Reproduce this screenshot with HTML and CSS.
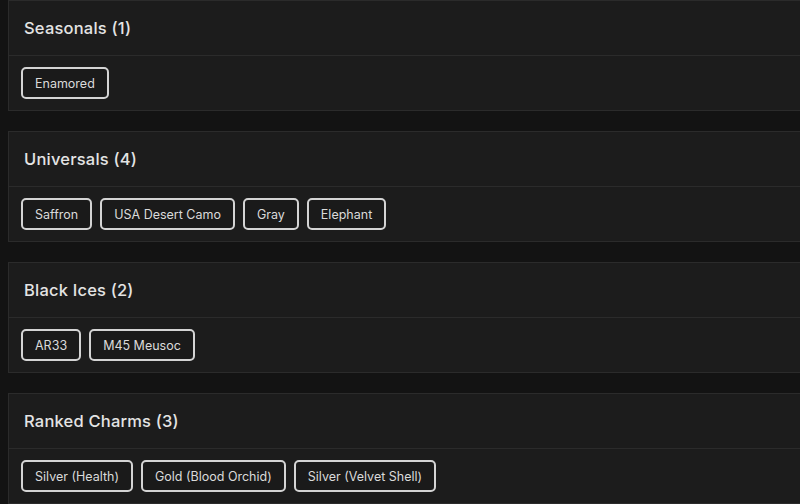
FILE: index.html
```html
<!DOCTYPE html>
<html>
<head>
<meta charset="utf-8">
<link rel="stylesheet" href="styles.css">
</head>
<body>
<div class="list">
  <section class="card">
    <div class="card-header"><h2 class="card-title">Seasonals (1)</h2></div>
    <div class="card-body">
      <span class="chip">Enamored</span>
    </div>
  </section>
  <section class="card">
    <div class="card-header"><h2 class="card-title">Universals (4)</h2></div>
    <div class="card-body">
      <span class="chip">Saffron</span>
      <span class="chip">USA Desert Camo</span>
      <span class="chip">Gray</span>
      <span class="chip">Elephant</span>
    </div>
  </section>
  <section class="card">
    <div class="card-header"><h2 class="card-title">Black Ices (2)</h2></div>
    <div class="card-body">
      <span class="chip">AR33</span>
      <span class="chip">M45 Meusoc</span>
    </div>
  </section>
  <section class="card">
    <div class="card-header"><h2 class="card-title">Ranked Charms (3)</h2></div>
    <div class="card-body">
      <span class="chip">Silver (Health)</span>
      <span class="chip">Gold (Blood Orchid)</span>
      <span class="chip">Silver (Velvet Shell)</span>
    </div>
  </section>
</div>
</body>
</html>
```
FILE: styles.css
```css
html, body {
  margin: 0;
  padding: 0;
  background: #131313;
  overflow: hidden;
}
body {
  width: 800px;
  height: 504px;
  font-family: Inter, "Noto Sans", sans-serif;
  color: #e2e2e2;
}
.list {
  display: flex;
  flex-direction: column;
  gap: 20px;
  margin-left: 8px;
  width: 810px;
}
.card {
  background: #1c1c1c;
  border: 1px solid #2b2b2b;
}
.card-header {
  height: 54px;
  display: flex;
  align-items: center;
  padding: 0 15px;
  border-bottom: 1px solid #2b2b2b;
}
.card-title {
  margin: 0;
  font-size: 16.5px;
  font-weight: 500;
  color: #e4e4e4;
  letter-spacing: 0.2px;
}
.card-body {
  display: flex;
  gap: 8px;
  padding: 11px 12px;
}
.chip {
  display: inline-flex;
  align-items: center;
  height: 28px;
  padding: 0 12px;
  border: 2px solid #d4d4d4;
  border-radius: 5px;
  font-size: 12.5px;
  color: #dadada;
  background: #1a1a1a;
}
```
